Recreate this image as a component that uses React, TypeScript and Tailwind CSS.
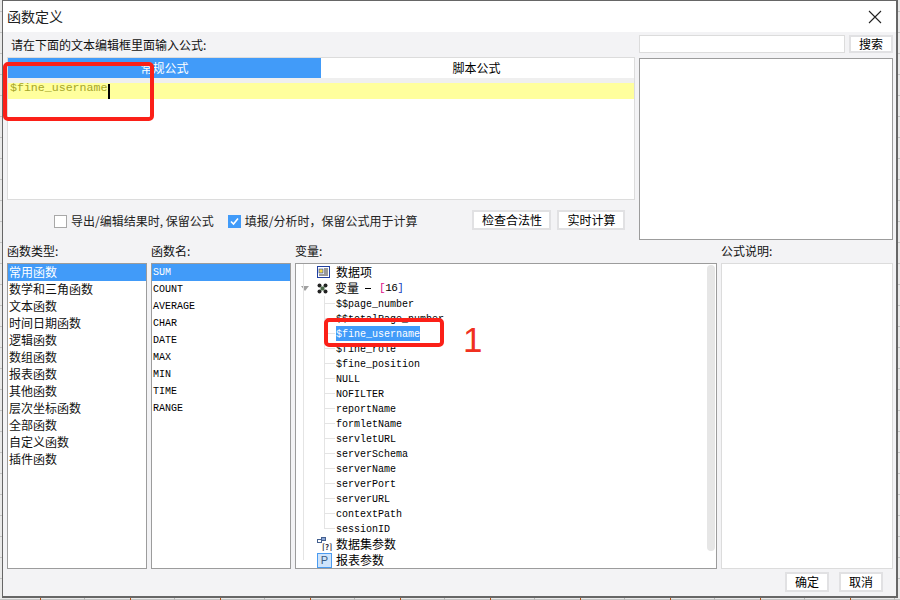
const cjk = "font-['Noto_Sans_CJK_SC','Noto_Sans',sans-serif]";
const types = ['常用函数','数学和三角函数','文本函数','时间日期函数','逻辑函数','数组函数','报表函数','其他函数','层次坐标函数','全部函数','自定义函数','插件函数'];
const names = ['SUM','COUNT','AVERAGE','CHAR','DATE','MAX','MIN','TIME','RANGE'];
const vars = ['$$page_number','$$totalPage_number','$fine_username','$fine_role','$fine_position','NULL','NOFILTER','reportName','formletName','servletURL','serverSchema','serverName','serverPort','serverURL','contextPath','sessionID'];
const mono = "font-['Liberation_Mono',monospace] text-[10px] text-black";

function Btn({ children, className }: { children: string; className: string }) {
  return <div className={`flex items-center justify-center bg-white border-2 border-[#e1e1e3] text-[12px] text-black ${className}`}>{children}</div>;
}
function Label({ children, className = '' }: { children: string; className?: string }) {
  return <div className={`text-[12px] leading-[14px] text-[#111] ${className}`}>{children}</div>;
}

export default function App() {
  return (
    <div className={`relative w-[900px] h-[600px] overflow-hidden bg-[#e9e9e9] ${cjk}`}>
      <div className="absolute inset-0 bg-[repeating-linear-gradient(90deg,transparent_0,transparent_84px,#b8b8b8_84px,#b8b8b8_85px,transparent_85px,transparent_90px),repeating-linear-gradient(180deg,transparent_0,transparent_11px,#c4c4c4_11px,#c4c4c4_12px,transparent_12px,transparent_21px)]" />
      <div className="absolute left-0 bottom-0 w-full h-[3px] bg-[repeating-linear-gradient(90deg,transparent_0,transparent_40px,#b85010_40px,#b85010_41px,transparent_41px,transparent_90px)]" />
      <div className="absolute left-[2px] top-0 w-[896px] h-[598px] flex flex-col border-l border-t border-r-2 border-b-2 border-[#666] bg-[#f3f3f5]">
        <div className="h-[31px] shrink-0 bg-white flex items-center justify-between pl-[4px] pr-[14px]">
          <span className="text-[14px] text-[#222]">函数定义</span>
          <svg width="14" height="14" viewBox="0 0 14 14" stroke="#222" strokeWidth="1.1" fill="none"><path d="M1 1 13 13M13 1 1 13" /></svg>
        </div>
        <div className="flex-1 flex flex-col pl-[4px] pr-[2px]">
          <div className="h-[208px] flex gap-[4px] shrink-0">
            <div className="w-[628px] flex flex-col">
              <Label className="pt-[6px] pl-[4px] h-[25px]">请在下面的文本编辑框里面输入公式:</Label>
              <div className="h-[143px] bg-white border border-[#dcdcdc] flex flex-col">
                <div className="h-[20px] flex text-[12px]">
                  <div className="w-[313px] bg-[#419bf9] text-white flex items-center justify-center">常规公式</div>
                  <div className="flex-1 bg-white text-black flex items-center justify-center pr-[2px]">脚本公式</div>
                </div>
                <div className="h-[5px] bg-[#efefef]" />
                <div className="h-[16px] bg-[#ffff9d] flex items-center pl-[2px] font-['Liberation_Mono',monospace] text-[11.6px] text-[#a6a62a]">
                  <span className="self-start leading-[9px]">$fine_username</span>
                  <span className="ml-[1px] w-[2px] h-[15px] bg-black" />
                </div>
              </div>
              <div className="flex-1 flex items-start pt-[10px]">
                <div className="flex items-center pl-[47px] pt-[2px] text-[12px] text-[#222]">
                  <span className="w-[13px] h-[13px] border border-[#a8a8a8] bg-white" />
                  <span className="ml-[4px]">导出/编辑结果时<span className="inline-block w-[6px]">,</span>保留公式</span>
                  <span className="ml-[14px] w-[13px] h-[13px] bg-[#419bf9] flex items-center justify-center">
                    <svg width="11" height="11" viewBox="0 0 11 11" fill="none" stroke="#fff" strokeWidth="1.6"><path d="M2 5.5 4.5 8 9 2.5" /></svg>
                  </span>
                  <span className="ml-[4px]">填报/分析时{'\uFF0C'}保留公式用于计算</span>
                </div>
                <Btn className="ml-[55px] w-[79px] h-[20px]">检查合法性</Btn>
                <Btn className="ml-[6px] w-[68px] h-[20px]">实时计算</Btn>
              </div>
            </div>
            <div className="w-[254px] flex flex-col">
              <div className="flex gap-[4px] pt-[3px] h-[26px]">
                <div className="w-[206px] h-[18px] bg-white border border-[#dcdcdc]" />
                <Btn className="w-[44px] h-[18px]">搜索</Btn>
              </div>
              <div className="h-[182px] bg-white border border-[#9c9c9c]" />
            </div>
          </div>
          <div className="flex gap-[4px] h-[329px] shrink-0">
            <div className="w-[140px] flex flex-col">
              <Label className="pt-[4px] h-[23px]">函数类型:</Label>
              <div className="h-[306px] bg-white border border-[#9c9c9c] text-[12px] text-[#111]">
                {types.map((t, i) => (
                  <div key={t} className={`h-[17px] leading-[15px] pl-[1px] ${i === 0 ? 'bg-[#419bf9] text-white' : ''}`}>{t}</div>
                ))}
              </div>
            </div>
            <div className="w-[140px] flex flex-col">
              <Label className="pt-[4px] h-[23px]">函数名:</Label>
              <div className="h-[306px] bg-white border border-[#9c9c9c]">
                {names.map((t, i) => (
                  <div key={t} className={`h-[17px] leading-[17px] pl-[1px] ${mono} ${i === 0 ? 'bg-[#419bf9] text-white' : ''}`}>{t}</div>
                ))}
              </div>
            </div>
            <div className="w-[422px] flex flex-col">
              <Label className="pt-[4px] h-[23px]">变量:</Label>
              <div className="relative h-[306px] bg-white border border-[#9c9c9c] text-[12px] text-black overflow-hidden">
                <div className="absolute left-[7px] top-0 bottom-[8px] border-l border-[#e4e4e4]" />
                <div className="absolute right-[1px] top-[1px] w-[8px] h-[286px] rounded bg-[#e6e6e6]" />
                <div className="flex items-center h-[16px] pl-[21px]">
                  <svg width="13" height="12" viewBox="0 0 13 12"><rect x=".5" y=".5" width="12" height="11" fill="#fff" stroke="#1f3f9f" /><rect x="2" y="3" width="4" height="4" fill="#f5d94a" stroke="#1f3f9f" strokeWidth=".6" /><path d="M7 3h4M7 5h4M7 7h4M2 9h9" stroke="#333" /></svg>
                  <span className="ml-[6px]">数据项</span>
                </div>
                <div className="flex items-center h-[16px] pl-[5px]">
                  <span className="w-0 h-0 border-l-[4px] border-r-[4px] border-t-[5px] border-l-transparent border-r-transparent border-t-[#a0a0a0]" />
                  <svg className="ml-[8px]" width="11" height="11" viewBox="0 0 11 11" fill="#222"><circle cx="2.5" cy="2.5" r="2" /><circle cx="8.5" cy="2.5" r="2" /><circle cx="2.5" cy="8.5" r="2" /><circle cx="8.5" cy="8.5" r="2" /><path d="M3.5 3.5h4v4h-4z" fill="#4a6a4a" /></svg>
                  <span className="ml-[7px]">变量</span>
                  <span className="ml-[6px] w-[6px] border-t border-black" />
                  <span className="ml-[8px] font-['Liberation_Mono',monospace] text-[11px] tracking-[-0.5px]"><span className="text-[#e0108a]">[</span>16<span className="text-[#2040c0]">]</span></span>
                </div>
                <div className="relative pl-[28px]">
                  <div className="absolute left-[28px] top-0 bottom-[7px] border-l border-[#e4e4e4]" />
                  {vars.map((v, i) => (
                    <div key={v} className="flex items-center h-[15px]">
                      <span className="w-[11px] border-t border-[#e4e4e4]" />
                      <span className={`ml-[1px] ${mono} leading-[17px] h-[15px] ${i === 2 ? 'bg-[#419bf9] text-white' : ''}`}>{v}</span>
                    </div>
                  ))}
                </div>
                <div className="flex items-center h-[16px] pl-[21px]">
                  <svg width="16" height="14" viewBox="0 0 16 14"><rect x="0.5" y="2.5" width="4" height="3" fill="#fff" stroke="#44608f" /><rect x="4.5" y=".5" width="4" height="3" fill="#8aa6d6" stroke="#44608f" /><text x="5" y="13" fontSize="8" fill="#334" fontWeight="700">[?]</text></svg>
                  <span className="ml-[3px]">数据集参数</span>
                </div>
                <div className="flex items-center h-[16px] pl-[21px]">
                  <span className="w-[15px] h-[15px] bg-[#cfe4fb] border border-[#4a9bf0] flex items-center justify-center text-[11px] text-[#3a5a80] font-['Liberation_Sans',sans-serif]">P</span>
                  <span className="ml-[4px]">报表参数</span>
                </div>
              </div>
            </div>
            <div className="w-[172px] flex flex-col">
              <Label className="pt-[4px] h-[23px]">公式说明:</Label>
              <div className="h-[306px] bg-white border border-[#dcdcdc]" />
            </div>
          </div>
          <div className="flex justify-end pr-[11px] gap-[10px] pt-[3px]">
            <Btn className="w-[44px] h-[20px]">确定</Btn>
            <Btn className="w-[44px] h-[20px]">取消</Btn>
          </div>
        </div>
      </div>
      <div className="absolute left-[3px] top-[62px] w-[151px] h-[59px] border-[4px] border-[#fb2018] rounded-[5px]" />
      <div className="absolute left-[324px] top-[318px] w-[120px] h-[29px] border-[4px] border-[#fb2018] rounded-[5px]" />
      <div className="absolute left-[463px] top-[321px] text-[35px] leading-[38px] text-[#f03020] font-['Liberation_Sans',sans-serif]">1</div>
    </div>
  );
}
